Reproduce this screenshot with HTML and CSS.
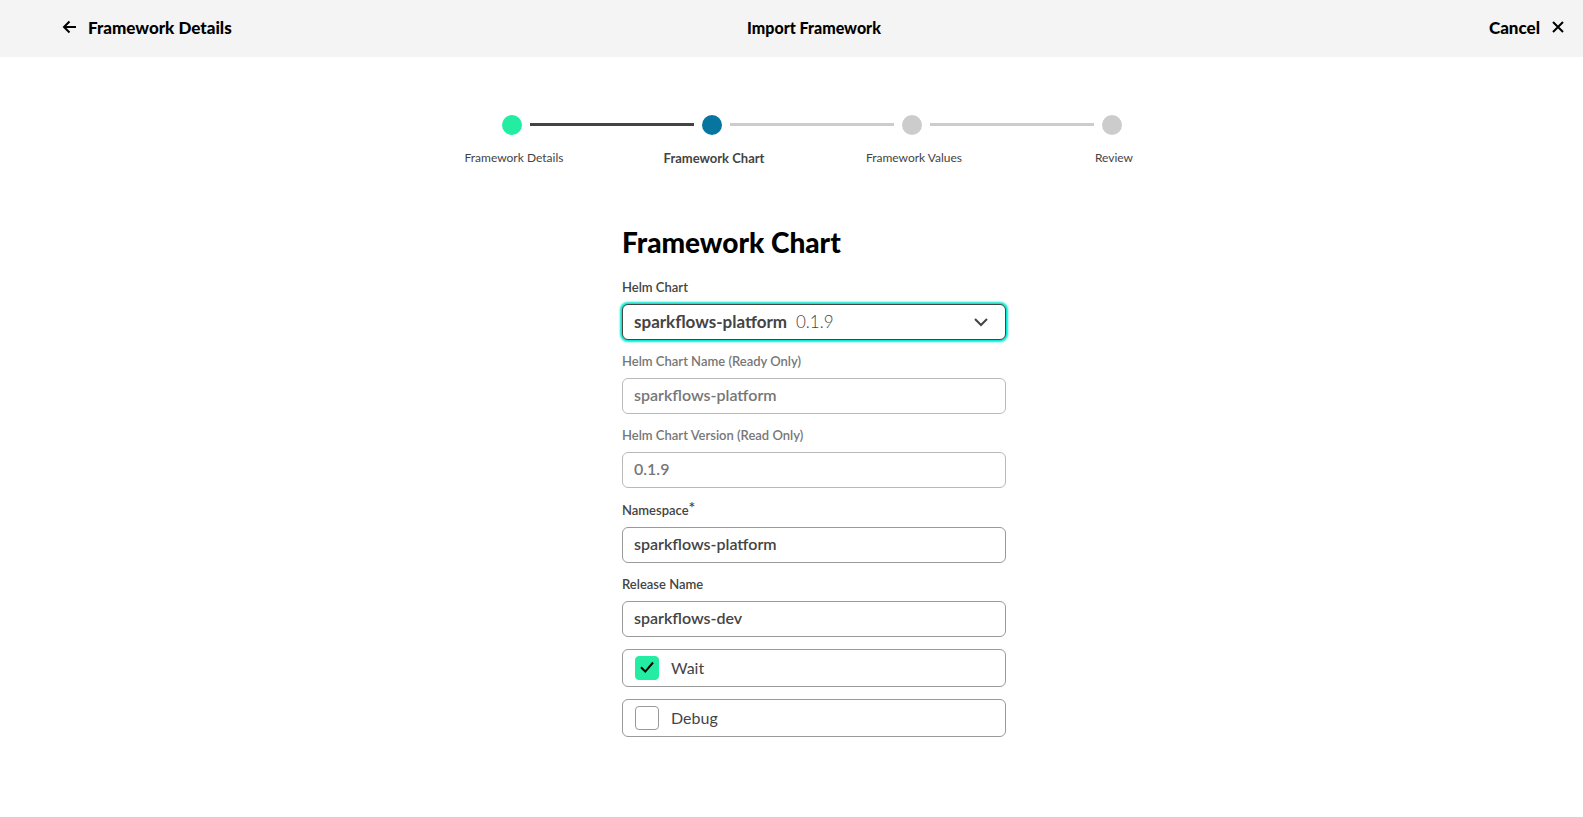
FILE: index.html
```html
<!DOCTYPE html>
<html lang="en">
<head>
<meta charset="utf-8">
<title>Import Framework</title>
<link rel="stylesheet" href="styles.css">
</head>
<body>
<header class="topbar">
  <button class="nav-button" type="button">
    <svg class="icon" viewBox="0 0 16 16" aria-hidden="true"><path d="M15 7H3M8.500 1.500 3 7 8.500 12.500"/></svg>
    Framework Details
  </button>
  <h1 class="topbar-title">Import Framework</h1>
  <button class="nav-button nav-cancel" type="button">
    Cancel
    <svg class="icon" viewBox="0 0 16 16" aria-hidden="true"><path d="M2 2 12 12M12 2 2 12"/></svg>
  </button>
</header>
<main class="page">
  <ol class="steps">
    <li class="step done"><span class="dot"></span><span class="step-label">Framework Details</span></li>
    <li class="step current" aria-current="step"><span class="dot"></span><span class="step-label">Framework Chart</span></li>
    <li class="step"><span class="dot"></span><span class="step-label">Framework Values</span></li>
    <li class="step"><span class="dot"></span><span class="step-label">Review</span></li>
  </ol>
  <form class="form">
    <h2 class="form-title">Framework Chart</h2>
    <div class="field">
      <label class="label" for="chart">Helm Chart</label>
      <div class="select-wrap">
        <select class="control select" id="chart"><option>sparkflows-platform</option></select>
        <span class="version">0.1.9</span>
        <svg class="chevron" viewBox="0 0 16 16" aria-hidden="true"><path d="M2 5 8 11 14 5"/></svg>
      </div>
    </div>
    <div class="field">
      <label class="label muted" for="name">Helm Chart Name (Ready Only)</label>
      <input class="control muted" id="name" type="text" value="sparkflows-platform" readonly>
    </div>
    <div class="field">
      <label class="label muted" for="version">Helm Chart Version (Read Only)</label>
      <input class="control muted" id="version" type="text" value="0.1.9" readonly>
    </div>
    <div class="field">
      <label class="label label-required" for="namespace">Namespace<sup class="required">*</sup></label>
      <input class="control" id="namespace" type="text" value="sparkflows-platform" required>
    </div>
    <div class="field">
      <label class="label" for="release">Release Name</label>
      <input class="control" id="release" type="text" value="sparkflows-dev">
    </div>
    <label class="check-row"><input class="check" type="checkbox" checked><svg class="tick" viewBox="0 0 24 24" aria-hidden="true"><path d="M6 11.300 10.300 15.600 18 6.500"/></svg>Wait</label>
    <label class="check-row"><input class="check" type="checkbox">Debug</label>
  </form>
</main>
</body>
</html>
```
FILE: styles.css
```css
* { box-sizing: border-box; }

body {
  margin: 0;
  background: #fff;
  color: #444;
  font-family: Lato, "Open Sans", sans-serif;
  font-size: 16px;
  line-height: 24px;
}

.topbar {
  display: grid;
  grid-template-columns: 1fr auto 1fr;
  align-items: center;
  padding: 12px 16px 13px 61px;
  background: #f4f4f4;
  color: #000;
}

.topbar-title {
  margin: 0;
  font-size: 16px;
  line-height: 24px;
  font-weight: 900;
}

.nav-button {
  display: flex;
  align-items: center;
  gap: 11px;
  justify-self: start;
  padding: 4px 0;
  border: 0;
  background: none;
  color: inherit;
  font: inherit;
  font-size: 17px;
  font-weight: 900;
}

.nav-cancel { justify-self: end; }

.icon {
  width: 16px;
  height: 16px;
  fill: none;
  stroke: currentColor;
  stroke-width: 2;
}

.page { padding: 58px 0 76px 45px; }

.steps {
  display: flex;
  justify-content: center;
  margin: 0 4px 0 0;
  padding: 0;
  list-style: none;
}

.step {
  position: relative;
  display: flex;
  flex-direction: column;
  align-items: center;
  gap: 14px;
  width: 200px;
  font-size: 12px;
  line-height: 18px;
}

.step:not(:last-child)::after {
  content: "";
  position: absolute;
  top: 8px;
  left: 118px;
  width: 164px;
  height: 3px;
  background: #ccc;
}

.step.done::after { background: #444; }

.dot {
  width: 20px;
  height: 20px;
  border-radius: 50%;
  background: #ccc;
}

.step-label { padding-left: 4px; }

.done .dot { background: #23eda3; }
.current .dot { background: #0675a0; }

.current .step-label {
  font-size: 13px;
  font-weight: 700;
}

.form {
  display: flex;
  flex-direction: column;
  gap: 12px;
  max-width: 384px;
  margin: 55px auto 0;
}

.form-title {
  margin: 0 0 4px;
  color: #000;
  font-size: 28px;
  line-height: 40px;
  font-weight: 900;
}

.label {
  display: block;
  height: 26px;
  font-size: 13px;
  line-height: 18px;
  font-weight: 600;
}

.label-required {
  height: 27px;
  line-height: 20px;
}

.required {
  font-size: 16px;
  line-height: 0;
  vertical-align: 2px;
}

.control {
  display: block;
  width: 100%;
  height: 36px;
  padding: 0 11px 3px;
  border: 1px solid #999;
  border-radius: 6px;
  background: #fff;
  color: #444;
  font: inherit;
  font-weight: 600;
}

.label.muted { color: #777; }

.control.muted {
  border-color: #b9b9b9;
  color: #777;
}

.select-wrap { position: relative; }

.control.select {
  appearance: none;
  padding: 0 11px;
  border-color: #444;
  font-size: 17px;
  font-weight: 700;
  box-shadow: 0 0 2px 2px #00e8cf;
}

.version {
  position: absolute;
  top: 6px;
  left: 174px;
  font-size: 17px;
  font-weight: 300;
  pointer-events: none;
}

.chevron {
  position: absolute;
  top: 10px;
  right: 17px;
  width: 16px;
  height: 16px;
  fill: none;
  stroke: #444;
  stroke-width: 2;
  pointer-events: none;
}

.check-row {
  position: relative;
  display: flex;
  align-items: center;
  gap: 12px;
  height: 38px;
  padding: 0 12px;
  border: 1px solid #999;
  border-radius: 6px;
}

.check {
  appearance: none;
  width: 24px;
  height: 24px;
  margin: 0;
  border: 1px solid #999;
  border-radius: 4px;
}

.check:checked {
  border-color: #23eda3;
  background: #23eda3;
}

.tick {
  position: absolute;
  left: 12px;
  width: 24px;
  height: 24px;
  fill: none;
  stroke: #000;
  stroke-width: 2;
  pointer-events: none;
}
```
